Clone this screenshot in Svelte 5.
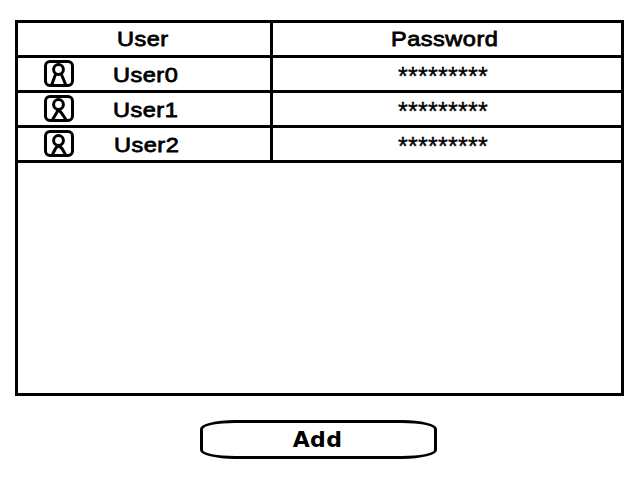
<script>
  const users = [
    { name: 'User0', nudge: 0, legs: 'M12 13.5L10.5 17L7.5 25.5M17 13.5L18.5 17L22 25.5' },
    { name: 'User1', nudge: 0, legs: 'M14.5 14.5L12.5 18L8 25.5M14.5 14.5L17.5 18L22.5 25.5' },
    { name: 'User2', nudge: 1, legs: 'M14.5 15.5L11.5 18.5L8 25.5M14.5 15.5L18 18.5L22 25.5' }
  ];
</script>

<main>
  <section class="table">
    <div class="row">
      <div class="user head"><span class="label">User</span></div>
      <div class="pass"><span class="label">Password</span></div>
    </div>
    {#each users as user, i}
      <div class="row">
        <div class="user">
          <svg width="30" height="27" viewBox="0 0 30 27" fill="none" stroke="#000">
            <rect x="1.5" y="1.5" width="27" height="24" rx="4.5" stroke-width="3" />
            <circle cx="14.5" cy={i === 2 ? 10.5 : 9.5} r="4.9" stroke-width="3" />
            <path d={user.legs} stroke-width="3" />
          </svg>
          <span class="label name" style:margin-left="{39 + user.nudge}px">{user.name}</span>
        </div>
        <div class="pass"><span class="stars">*********</span></div>
      </div>
    {/each}
  </section>
  <button>Add</button>
</main>

<style>
  :global(body) { background: #fff; }
  main {
    box-sizing: border-box;
    width: 640px;
    height: 480px;
    padding: 20px 16px 0 15px;
    display: flex;
    flex-direction: column;
    font: 400 21px/32px "Liberation Sans", Arial, sans-serif;
    color: #000;
  }
  .table {
    box-sizing: border-box;
    height: 376px;
    border: 3px solid #000;
  }
  .row {
    display: flex;
    height: 32px;
    border-bottom: 3px solid #000;
  }
  .user {
    box-sizing: border-box;
    width: 255px;
    padding-left: 26px;
    border-right: 3px solid #000;
    display: flex;
    align-items: flex-start;
  }
  .head { padding-left: 99px; }
  svg { flex: none; margin-top: 2px; }
  .label {
    display: inline-block;
    transform: scaleX(1.12);
    transform-origin: left;
    letter-spacing: 0.45px;
    -webkit-text-stroke: 0.8px #000;
  }
  .name { position: relative; top: 1px; }
  .pass { flex: 1; padding-left: 118px; }
  .stars {
    display: block;
    padding-left: 7px;
    padding-top: 2px;
    font: 400 25px/32px "Liberation Sans", Arial, sans-serif;
    letter-spacing: 0.27px;
    -webkit-text-stroke: 0.4px #000;
  }
  button {
    box-sizing: border-box;
    width: 237px;
    height: 39px;
    margin: 24px 0 0 185px;
    padding: 0 2px 0 0;
    border: 3px solid #000;
    border-radius: 35px / 9px;
    background: #fff;
    color: #000;
    font: 700 22px/32px "DejaVu Sans", sans-serif;
    letter-spacing: 0.3px;
  }
</style>
